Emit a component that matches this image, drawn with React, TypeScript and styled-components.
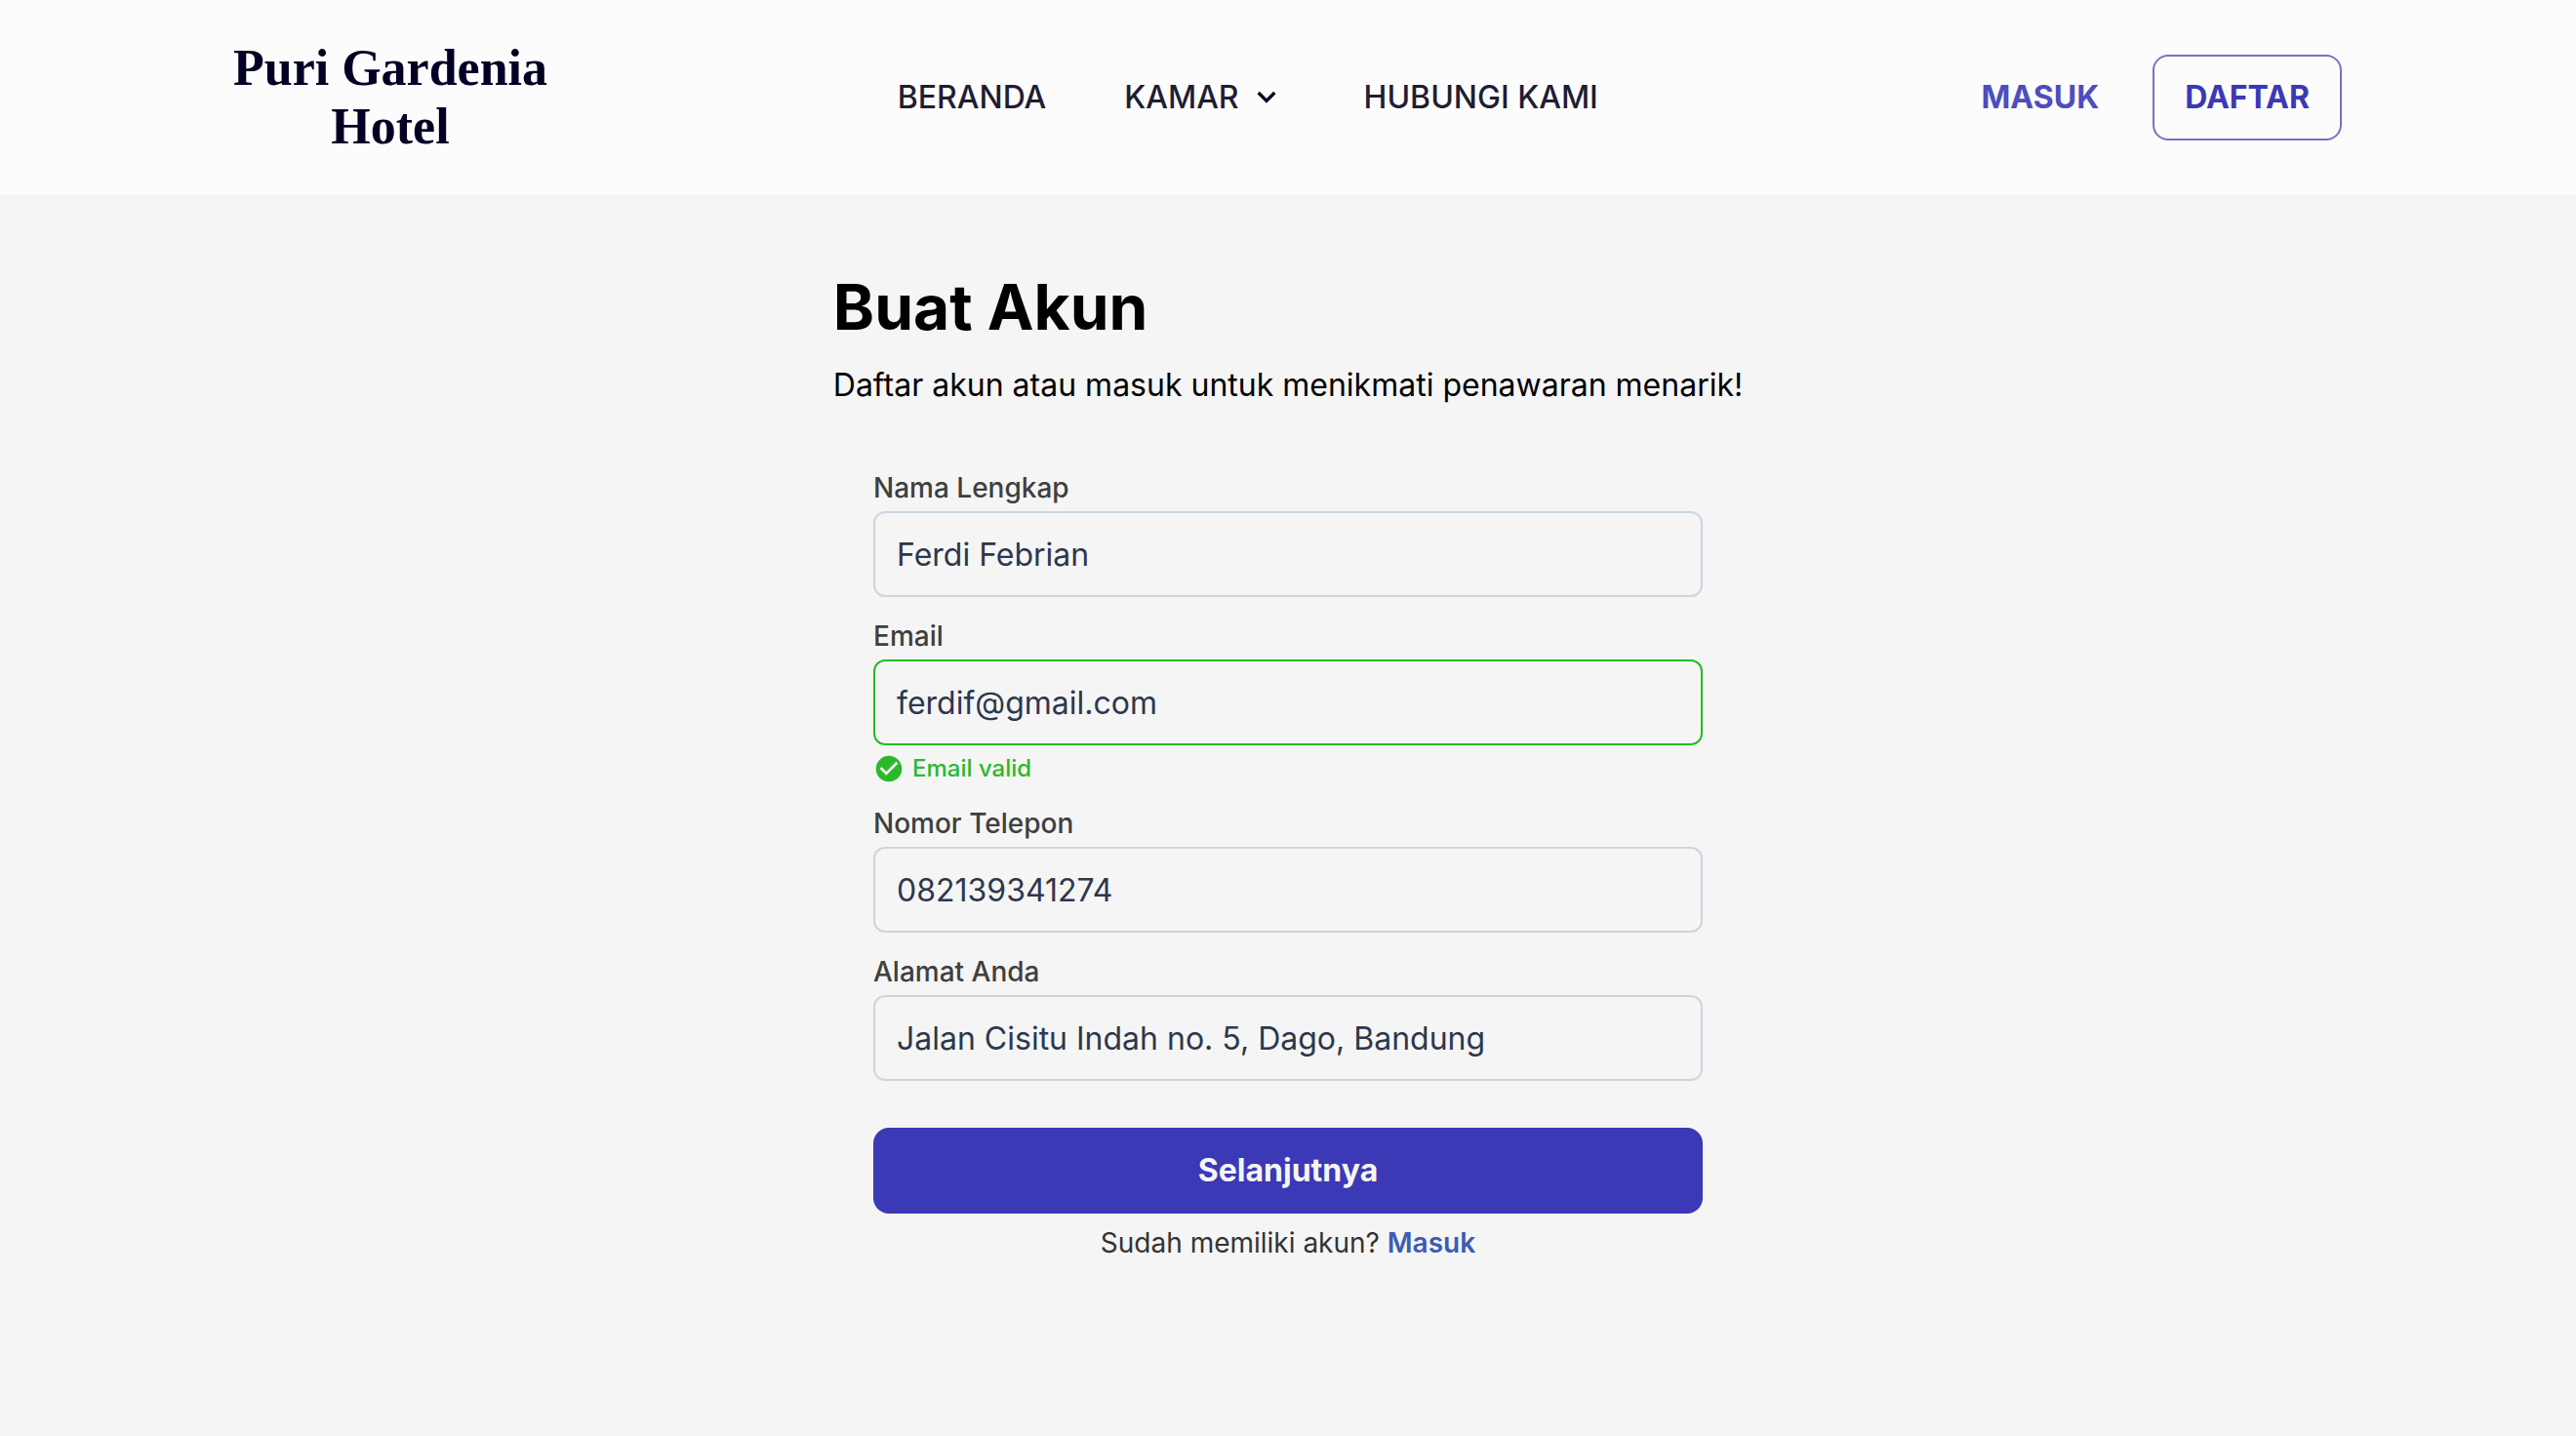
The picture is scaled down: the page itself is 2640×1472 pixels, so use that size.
import React, { useState } from "react";
import styled, { createGlobalStyle } from "styled-components";

const GlobalStyle = createGlobalStyle`
  *, *::before, *::after { box-sizing: border-box; }
  body {
    margin: 0;
    min-height: 100vh;
    background: #f5f5f5;
    color: #000;
    font-family: Inter, "Liberation Sans", sans-serif;
    font-size: 32px;
    line-height: 48px;
  }
  h1, p { margin: 0; }
  a { color: inherit; text-decoration: none; }
  button, input { font: inherit; }
`;

const Header = styled.header`
  display: flex;
  align-items: center;
  justify-content: space-between;
  min-height: 200px;
  padding: 0 240px;
  background: #fcfcfc;
`;

const Logo = styled.a`
  display: flex;
  flex-direction: column;
  align-items: center;
  width: 320px;
  color: #020024;
  font-family: "Liberation Serif", serif;
  font-size: 52px;
  font-weight: 700;
  line-height: 60px;
  white-space: nowrap;
`;

const Nav = styled.nav`
  display: flex;
  align-items: center;
  gap: 80px;
  color: #1f1d33;
  font-weight: 500;
`;

const NavMenu = styled.button`
  display: flex;
  align-items: center;
  gap: 8px;
  padding: 0;
  border: 0;
  background: none;
  color: inherit;
  cursor: pointer;
`;

const Chevron = styled.svg`
  width: 40px;
  height: 40px;
  color: #020024;
`;

const Actions = styled.div`
  display: flex;
  align-items: center;
  gap: 22px;
`;

const ActionButton = styled.button<{ $outlined?: boolean }>`
  height: 88px;
  padding: 0 31px;
  border: 2px solid ${(p) => (p.$outlined ? "#7573cb" : "transparent")};
  border-radius: 16px;
  background: none;
  color: ${(p) => (p.$outlined ? "#3b39b5" : "#4f4dbd")};
  font-weight: 700;
  cursor: pointer;
`;

const Main = styled.main`
  display: flex;
  flex-direction: column;
  width: fit-content;
  margin: 0 auto;
  padding: 75px 0;
`;

const Title = styled.h1`
  font-size: 64px;
  font-weight: 700;
  line-height: 80px;
`;

const Subtitle = styled.p`
  margin-top: 16px;
`;

const Form = styled.form`
  display: flex;
  flex-direction: column;
  gap: 20px;
  width: 850px;
  max-width: 100%;
  margin: 61px auto 0;
`;

const Field = styled.div`
  display: flex;
  flex-direction: column;
  gap: 4px;
`;

const Label = styled.label`
  color: #3f3f3f;
  font-size: 28px;
  font-weight: 500;
  line-height: 40px;
`;

const Input = styled.input<{ $valid?: boolean }>`
  width: 100%;
  height: 88px;
  padding: 0 22px;
  border: 2px solid ${(p) => (p.$valid ? "#26bb26" : "#cbd5e1")};
  border-radius: 12px;
  outline: none;
  background: transparent;
  color: #2d374d;
`;

const Hint = styled.p`
  display: flex;
  align-items: center;
  gap: 8px;
  margin-top: 4px;
  color: #2bb92b;
  font-size: 24px;
  font-weight: 500;
  line-height: 32px;
`;

const HintIcon = styled.svg`
  width: 32px;
  height: 32px;
`;

const Submit = styled.button`
  height: 88px;
  margin-top: 28px;
  border: 0;
  border-radius: 16px;
  background: #3b39b5;
  color: #f5f5f5;
  font-weight: 700;
  cursor: pointer;
`;

const Footer = styled.p`
  margin-top: -10px;
  color: #333;
  font-size: 28px;
  line-height: 40px;
  text-align: center;
`;

const FooterLink = styled.a`
  color: #3b5bb5;
  font-weight: 600;
`;

const FIELDS = [
  { id: "name", label: "Nama Lengkap", type: "text", value: "Ferdi Febrian" },
  { id: "email", label: "Email", type: "email", value: "ferdif@gmail.com" },
  { id: "phone", label: "Nomor Telepon", type: "tel", value: "082139341274" },
  { id: "address", label: "Alamat Anda", type: "text", value: "Jalan Cisitu Indah no. 5, Dago, Bandung" },
];

export default function App() {
  const [values, setValues] = useState<Record<string, string>>(
    Object.fromEntries(FIELDS.map((f) => [f.id, f.value]))
  );
  const emailValid = /^[^@\s]+@[^@\s]+\.[^@\s]+$/.test(values.email);

  return (
    <>
      <GlobalStyle />
      <Header>
        <Logo href="#">
          <span>Puri Gardenia</span>
          <span>Hotel</span>
        </Logo>
        <Nav>
          <a href="#beranda">BERANDA</a>
          <NavMenu type="button">
            KAMAR
            <Chevron viewBox="0 0 24 24" fill="currentColor" aria-hidden="true">
              <path d="M16.293 8.293 12 12.586 7.707 8.293 6.293 9.707 12 15.414l5.707-5.707z" />
            </Chevron>
          </NavMenu>
          <a href="#kontak">HUBUNGI KAMI</a>
        </Nav>
        <Actions>
          <ActionButton type="button">MASUK</ActionButton>
          <ActionButton type="button" $outlined>DAFTAR</ActionButton>
        </Actions>
      </Header>
      <Main>
        <Title>Buat Akun</Title>
        <Subtitle>Daftar akun atau masuk untuk menikmati penawaran menarik!</Subtitle>
        <Form onSubmit={(e) => e.preventDefault()}>
          {FIELDS.map((f) => {
            const valid = f.id === "email" && emailValid;
            return (
              <Field key={f.id}>
                <Label htmlFor={f.id}>{f.label}</Label>
                <Input
                  id={f.id}
                  type={f.type}
                  value={values[f.id]}
                  $valid={valid}
                  onChange={(e) => setValues({ ...values, [f.id]: e.target.value })}
                />
                {valid && (
                  <Hint>
                    <HintIcon viewBox="0 0 24 24" fill="currentColor" aria-hidden="true">
                      <path d="M12 2C6.48 2 2 6.48 2 12s4.480 10 10 10 10-4.480 10-10S17.520 2 12 2zm-2 15l-5-5 1.410-1.410L10 14.170l7.590-7.590L19 8l-9 9z" />
                    </HintIcon>
                    Email valid
                  </Hint>
                )}
              </Field>
            );
          })}
          <Submit type="submit">Selanjutnya</Submit>
          <Footer>
            Sudah memiliki akun? <FooterLink href="#masuk">Masuk</FooterLink>
          </Footer>
        </Form>
      </Main>
    </>
  );
}
